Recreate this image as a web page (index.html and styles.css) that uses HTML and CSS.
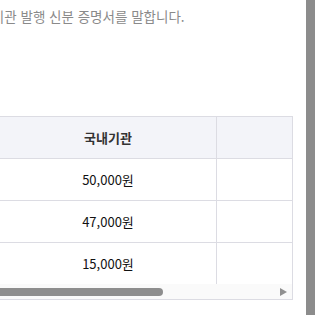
FILE: index.html
```html
<!DOCTYPE html>
<html lang="ko">
<head>
<meta charset="utf-8">
<link rel="stylesheet" href="styles.css">
</head>
<body>
<div class="screen">
  <div class="main">
    <p class="desc">공공기관 발행 신분 증명서를 말합니다.</p>
    <div class="table-wrap">
      <table class="fee">
        <thead>
          <tr><th class="c1">국내기관</th><th class="c2"></th></tr>
        </thead>
        <tbody>
          <tr><td class="c1">50,000원</td><td class="c2"></td></tr>
          <tr><td class="c1">47,000원</td><td class="c2"></td></tr>
          <tr class="last"><td class="c1">15,000원</td><td class="c2"></td></tr>
        </tbody>
      </table>
      <div class="hscroll">
        <div class="thumb"></div>
        <div class="arrow"></div>
      </div>
    </div>
  </div>
  <div class="vscroll"></div>
</div>
</body>
</html>
```
FILE: styles.css
```css
html, body {
  margin: 0;
  padding: 0;
  background: #fff;
}
body {
  font-family: "Noto Sans CJK KR", "Noto Sans", sans-serif;
}
.screen {
  display: flex;
  width: 318px;
  height: 315px;
  overflow: hidden;
  background: #fff;
}
.main {
  width: 306px;
  flex: none;
  overflow: hidden;
}
.vscroll {
  width: 9px;
  flex: none;
  background: #8c8c8c;
}
.desc {
  margin: 6px 0 0 -33px;
  font-size: 13.5px;
  line-height: 20px;
  color: #8a8a8a;
  white-space: nowrap;
}
.table-wrap {
  margin: 90px 0 0 -1px;
  width: 292px;
  border: 1px solid #dcdce3;
}
.fee {
  border-collapse: collapse;
  table-layout: fixed;
  width: 292px;
}
.fee th, .fee td {
  height: 41px;
  padding: 0;
  font-size: 13px;
  text-align: center;
  border-bottom: 1px solid #dcdce3;
}
.fee .c1 {
  width: 216px;
  border-right: 1px solid #dcdce3;
}
.fee th {
  background: #f3f4f9;
  color: #333;
  font-weight: 700;
}
.fee td {
  color: #111;
  font-weight: 400;
}
.fee tr.last td {
  border-bottom: none;
}
.hscroll {
  height: 15px;
  background: #fafafa;
  display: flex;
  align-items: center;
  justify-content: space-between;
}
.thumb {
  width: 167px;
  height: 8px;
  margin-left: -4px;
  background: #8e8e8e;
  border-radius: 4px;
}
.arrow {
  width: 0;
  height: 0;
  margin-right: 5px;
  border-top: 4px solid transparent;
  border-bottom: 4px solid transparent;
  border-left: 7px solid #909090;
}
```
